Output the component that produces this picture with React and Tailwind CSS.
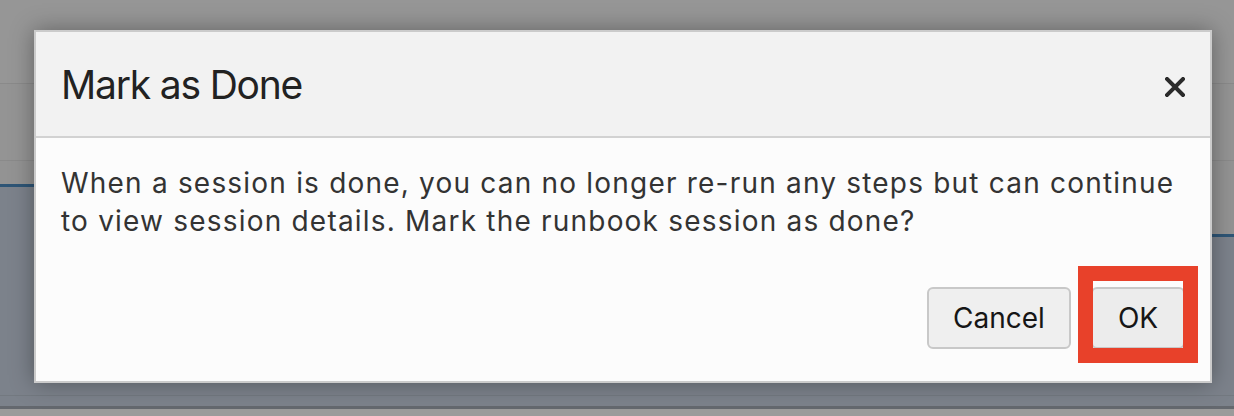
import React from 'react';

const font = { fontFamily: 'Inter, "Liberation Sans", sans-serif' };

const PageColumn = ({ className, blueAt }) => (
  <div className={`flex flex-col ${className}`}>
    <div className="h-[83px] bg-[#969696]" />
    <div className="h-px bg-[#8a8a8a]" />
    <div className="h-[76px] bg-[#949494]" />
    <div className="h-px bg-[#8a8a8a]" />
    <div className={`${blueAt} bg-[#939393]`} />
    <div className="h-[3px] bg-[#2e5576]" />
    <div className="flex-1 flex flex-col bg-[#7c828b]">
      <div className="flex-1" />
      <div className="h-px bg-[#737980]" />
      <div className="h-[10px]" />
    </div>
  </div>
);

const CloseIcon = () => (
  <svg width="20" height="20" viewBox="0 0 20 20" className="text-[#2b2b2b]">
    <path d="M2 2 L18 18 M18 2 L2 18" stroke="currentColor" strokeWidth="4" strokeLinecap="square" />
  </svg>
);

export default function App() {
  return (
    <div className="relative w-[1234px] h-[416px] overflow-hidden bg-[#959595]" style={font}>
      <div className="flex flex-col h-full">
        <div className="flex h-[406px]">
          <PageColumn className="w-[1212px]" blueAt="h-[23px]" />
          <PageColumn className="flex-1" blueAt="h-[73px]" />
        </div>
        <div className="h-[3px] bg-[#64686e]" />
        <div className="flex-1 bg-[#9b9b9b]" />
      </div>

      <div className="absolute left-[34px] top-[30px] w-[1178px] border-2 border-[#cbcbcb] bg-[#fcfcfc] shadow-[0_0_22px_rgba(0,0,0,0.35)]">
        <div className="h-[104px] bg-[#f2f2f2] border-b-2 border-[#d2d2d2] box-content flex items-center justify-between pl-[25px] pr-[25px]">
          <h1 className="text-[39px] text-[#222] leading-none tracking-[-1.2px] mt-[1px]">Mark as Done</h1>
          <button className="mt-[5px] flex items-center justify-center"><CloseIcon /></button>
        </div>
        <div className="pt-[26px] pb-[32px] pl-[25px] pr-[25px]">
          <p className="text-[28px] leading-[38px] text-[#333] tracking-[1.2px]">
            When a session is done, you can no longer re-run any steps but can continue<br />
            to view session details. Mark the runbook session as done?
          </p>
          <div className="mt-[47px] flex justify-end gap-[20px]">
            <button className="w-[144px] h-[62px] border-2 border-[#c8c8c8] rounded-[6px] bg-[#efefef] text-[28px] text-[#161616]">
              Cancel
            </button>
            <div className="relative">
              <button className="w-[94px] h-[62px] border-2 border-[#c8c8c8] rounded-[6px] bg-[#ececec] text-[28px] text-[#161616]">
                OK
              </button>
              <div className="absolute left-[-13px] right-[-13px] top-[-21px] bottom-[-14px] border-[15px] border-[#e8412a] pointer-events-none" />
            </div>
          </div>
        </div>
      </div>
    </div>
  );
}
